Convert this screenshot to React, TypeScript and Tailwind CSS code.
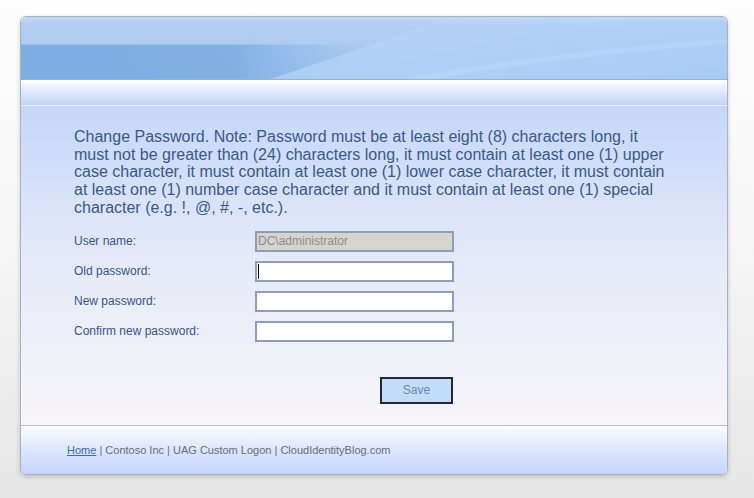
const font = { fontFamily: '"Liberation Sans", Arial, sans-serif' };

function HeaderArt() {
  return (
    <svg className="block h-full w-full" viewBox="0 0 708 63" preserveAspectRatio="none">
      <defs>
        <linearGradient id="hdrBase" x1="0" y1="0" x2="0" y2="1">
          <stop offset="0" stopColor="#b7cff1" />
          <stop offset="1" stopColor="#a3c6f1" />
        </linearGradient>
        <linearGradient id="hdrBand" x1="0" y1="0" x2="1" y2="0">
          <stop offset="0" stopColor="#7dade3" stopOpacity="1" />
          <stop offset="0.3" stopColor="#7dade3" stopOpacity="0.9" />
          <stop offset="0.5" stopColor="#8dbaea" stopOpacity="0" />
        </linearGradient>
        <linearGradient id="hdrSweep" x1="0" y1="0" x2="1" y2="0">
          <stop offset="0" stopColor="#bcd8fa" stopOpacity="0.6" />
          <stop offset="1" stopColor="#acd0fa" stopOpacity="0.45" />
        </linearGradient>
      </defs>
      <rect x="0" y="0" width="708" height="63" fill="url(#hdrBase)" />
      <rect x="0" y="28" width="708" height="35" fill="url(#hdrBand)" />
      <path d="M250 63 C 320 40, 380 18, 430 0 L 708 0 L 708 63 Z" fill="url(#hdrSweep)" />
      <path d="M380 63 C 470 45, 600 30, 708 22 L 708 27 C 600 36, 480 50, 420 63 Z" fill="#c4dcfa" opacity="0.35" />
      <rect x="0" y="0" width="708" height="4" fill="#c8dbf4" opacity="0.5" />
    </svg>
  );
}

function Field({ label, value, disabled, caret }: { label: string; value?: string; disabled?: boolean; caret?: boolean }) {
  return (
    <div className="flex h-[30px] items-start">
      <label className="w-[181px] pt-[3px] text-[12px] leading-[15px] text-[#38568a]">{label}</label>
      <div className="relative">
        <input
          readOnly
          value={value ?? ""}
          className={`block h-[21px] w-[199px] border-2 border-[#8d9fb7] px-[1px] text-[12px] leading-[15px] outline-none ${
            disabled ? "bg-[#d7d3cd] text-[#8e8e8e]" : "bg-white text-black"
          }`}
          style={font}
        />
        {caret ? <span className="absolute left-[3px] top-[3px] h-[15px] w-[1px] bg-black" /> : null}
      </div>
    </div>
  );
}

export default function App() {
  return (
    <div className="h-[498px] w-[754px] overflow-hidden bg-gradient-to-b from-[#fdfdfd] via-[#f6f6f6] to-[#e6e6e6] pt-[16px]" style={font}>
      <div className="ml-[20px] w-[708px] rounded-[6px] border border-[#a7b3c4] shadow-[0_2px_5px_rgba(0,0,0,0.18)]">
        <div className="h-[63px] overflow-hidden rounded-t-[6px] border-b border-[#9fb2cc]">
          <HeaderArt />
        </div>
        <div className="h-[26px] border-b border-[#e7eefc] bg-gradient-to-b from-[#ffffff] via-[#dfe7fc] to-[#c6d4f9]" />
        <div className="h-[319px] bg-gradient-to-b from-[#c5d7fa] via-[#e6eaf8] to-[#f7f5f8] pl-[53px] pt-[22px]">
          <p className="whitespace-nowrap text-[16px] leading-[17.7px] text-[#3b5988]">
            Change Password. Note: Password must be at least eight (8) characters long, it
            <br />
            must not be greater than (24) characters long, it must contain at least one (1) upper
            <br />
            case character, it must contain at least one (1) lower case character, it must contain
            <br />
            at least one (1) number case character and it must contain at least one (1) special
            <br />
            character (e.g. !, @, #, -, etc.).
          </p>
          <div className="mt-[14px]">
            <Field label="User name:" value="DC\administrator" disabled />
            <Field label="Old password:" caret />
            <Field label="New password:" />
            <Field label="Confirm new password:" />
          </div>
          <div className="ml-[306px] mt-[26px]">
            <button className="h-[27px] w-[73px] border-2 border-[#1e2936] bg-[#c3dcf7] text-[12px] text-[#6689b5]" style={font}>
              Save
            </button>
          </div>
        </div>
        <div className="flex h-[49px] items-center rounded-b-[6px] border-t border-[#b5c0d0] bg-gradient-to-b from-[#fbfcff] via-[#dde6fc] to-[#c4d5fb] pl-[46px] text-[11px] text-[#666e7c]">
          <a className="text-[#3b6bb0] underline" href="#">Home</a>
          <span>&nbsp;| Contoso Inc | UAG Custom Logon | CloudIdentityBlog.com</span>
        </div>
      </div>
    </div>
  );
}
